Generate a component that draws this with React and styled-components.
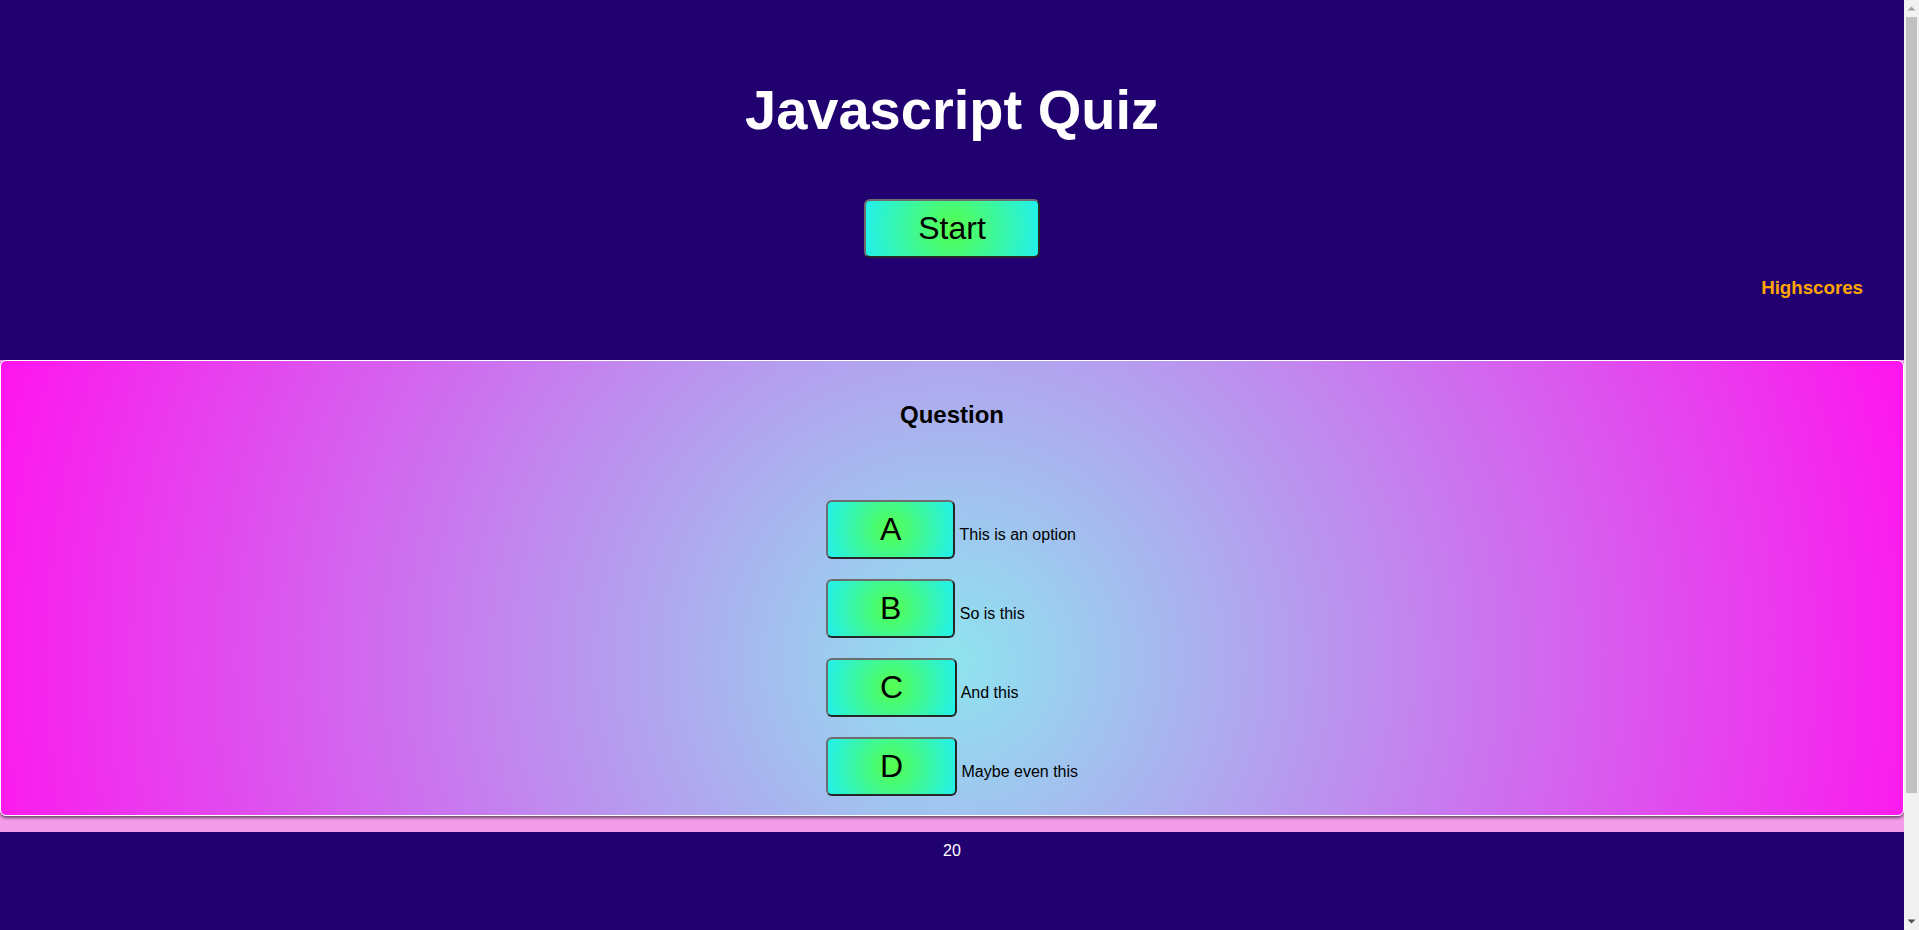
import React from 'react';
import styled, { createGlobalStyle } from 'styled-components';

const options = [
  { key: 'A', text: 'This is an option' },
  { key: 'B', text: 'So is this' },
  { key: 'C', text: 'And this' },
  { key: 'D', text: 'Maybe even this' },
];

function App() {
  return (
    <>
      <GlobalStyle />
      <Header>
        <Title>Javascript Quiz</Title>
        <GreenButton>Start</GreenButton>
        <ScoresRow>
          <ScoresLink href="#">Highscores</ScoresLink>
        </ScoresRow>
      </Header>
      <QuizSection>
        <Card>
          <Question>Question</Question>
          <OptionList>
            {options.map((o) => (
              <OptionRow key={o.key}>
                <GreenButton>{o.key}</GreenButton> {o.text}
              </OptionRow>
            ))}
          </OptionList>
        </Card>
      </QuizSection>
      <Timer>20</Timer>
      <ScrollBar aria-hidden="true">
        <ScrollArrow viewBox="0 0 15 17">
          <polygon points="3.5,10.5 11.5,10.5 7.5,6.5" fill="#a3a3a3" />
        </ScrollArrow>
        <ScrollTrack>
          <ScrollThumb />
        </ScrollTrack>
        <ScrollArrow viewBox="0 0 15 17">
          <polygon points="3.5,6.5 11.5,6.5 7.5,10.5" fill="#505050" />
        </ScrollArrow>
      </ScrollBar>
    </>
  );
}

const GlobalStyle = createGlobalStyle`
  html, body {
    margin: 0;
    padding: 0;
  }
  body {
    padding-right: 15px;
    background-color: #21006f;
    font-family: "Liberation Sans", Arial, sans-serif;
  }
`;

const Header = styled.header`
  text-align: center;
`;

const Title = styled.h1`
  margin: 77px 0 57px;
  font-size: 56px;
  font-weight: bold;
  color: #ffffff;
`;

const GreenButton = styled.button`
  display: inline-block;
  padding: 8px 52px;
  font-family: "Liberation Sans", Arial, sans-serif;
  font-size: 32px;
  line-height: 39px;
  color: #000;
  background: radial-gradient(circle farthest-corner at 50% 50%, #56ff4c 0%, #22f0ee 100%);
  border: 2px solid;
  border-color: #6c6c6c #262626 #262626 #6c6c6c;
  border-radius: 6px;
  cursor: pointer;
`;

const ScoresRow = styled.div`
  margin-top: 19px;
  padding-right: 41px;
  text-align: right;
  line-height: 22px;
`;

const ScoresLink = styled.a`
  font-size: 18.72px;
  font-weight: bold;
  color: #ffa500;
  text-decoration: none;
`;

const QuizSection = styled.section`
  margin-top: 60px;
  padding-bottom: 16px;
  background-color: #f39be9;
`;

const Card = styled.div`
  padding: 40px 0 19px;
  text-align: center;
  border: 1px solid #ffffff;
  border-radius: 6px;
  background: radial-gradient(circle farthest-corner at 50% 66%, #8fe4ef 0%, #ff14ee 100%);
  box-shadow: 0 2px 3px rgba(0, 0, 0, 0.55);
`;

const Question = styled.h2`
  margin: 0 0 71px;
  font-size: 24px;
  color: #000;
`;

const OptionList = styled.div`
  display: flex;
  flex-direction: column;
  align-items: flex-start;
  gap: 20px;
  width: fit-content;
  margin: 0 auto;
`;

const OptionRow = styled.div`
  font-size: 16px;
  color: #000;
  text-align: left;
`;

const Timer = styled.div`
  margin-top: 10px;
  padding-bottom: 213px;
  text-align: center;
  font-size: 16px;
  color: #ffffff;
`;

const ScrollBar = styled.div`
  position: fixed;
  top: 0;
  right: 0;
  width: 15px;
  height: 100vh;
  display: flex;
  flex-direction: column;
  background: #f1f1f1;
`;

const ScrollArrow = styled.svg`
  width: 15px;
  height: 17px;
  flex: none;
`;

const ScrollTrack = styled.div`
  flex: 1;
  padding: 0 2px;
`;

const ScrollThumb = styled.div`
  height: 86.6%;
  background: #c1c1c1;
`;

export default App;
